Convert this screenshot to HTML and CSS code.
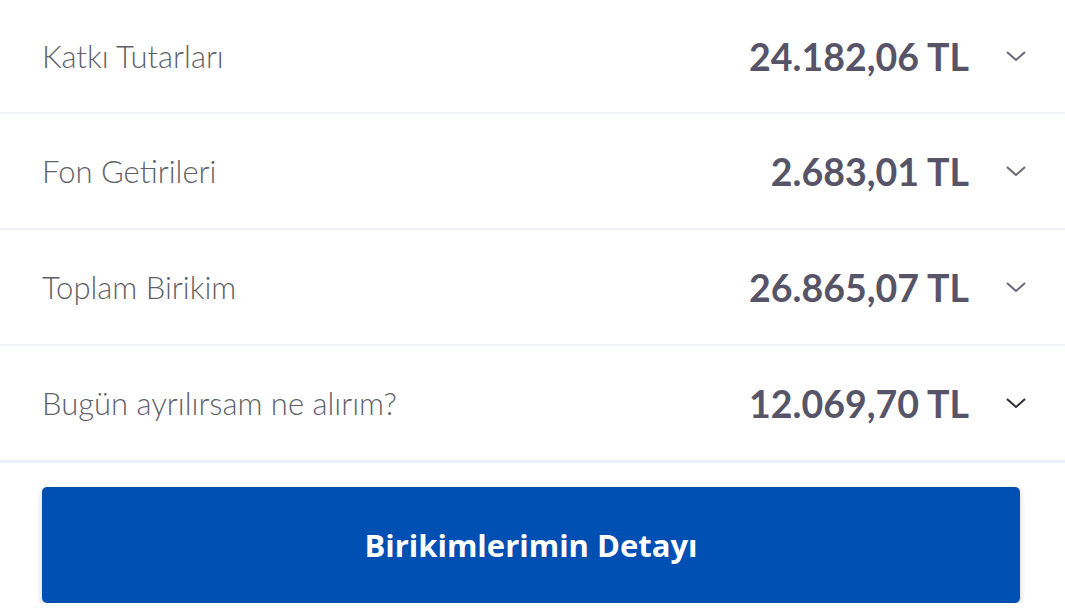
FILE: index.html
```html
<!DOCTYPE html>
<html lang="tr">
<head>
    <meta charset="UTF-8">
    <meta name="viewport" content="width=device-width, initial-scale=1.0">
    <title>Birikimlerim</title>
    <link rel="stylesheet" href="styles.css">
</head>
<body>
    <div class="summary">
        <div class="row">
            <span class="label">Katkı Tutarları</span>
            <span class="amount">24.182,06 TL</span>
            <svg class="chevron" viewBox="0 0 20 10"><path d="M1 1 L10 9 L19 1"/></svg>
        </div>
        <div class="row">
            <span class="label">Fon Getirileri</span>
            <span class="amount">2.683,01 TL</span>
            <svg class="chevron" viewBox="0 0 20 10"><path d="M1 1 L10 9 L19 1"/></svg>
        </div>
        <div class="row">
            <span class="label">Toplam Birikim</span>
            <span class="amount">26.865,07 TL</span>
            <svg class="chevron" viewBox="0 0 20 10"><path d="M1 1 L10 9 L19 1"/></svg>
        </div>
        <div class="row last">
            <span class="label">Bugün ayrılırsam ne alırım?</span>
            <span class="amount">12.069,70 TL</span>
            <svg class="chevron dark" viewBox="0 0 20 10"><path d="M1 1 L10 9 L19 1"/></svg>
        </div>
    </div>
    <div class="actions">
        <button type="button" class="detail-btn">Birikimlerimin Detayı</button>
    </div>
</body>
</html>
```

FILE: styles.css
```css
body {
    font-family: Lato, "Open Sans", sans-serif;
    background-color: #fff;
    margin: 0;
    padding: 0;
}
.row {
    display: flex;
    align-items: center;
    height: 114px;
    padding: 0 39px 0 42px;
    border-bottom: 2px solid #eef1f5;
}
.row:first-child {
    height: 112px;
}
.row.last {
    border-bottom: 3px solid #eef2f8;
}
.label {
    flex: 1;
    font-size: 31px;
    font-weight: 300;
    color: #5f5f68;
}
.amount {
    font-size: 37.5px;
    font-weight: 700;
    color: #575467;
}
.chevron {
    width: 20px;
    height: 10px;
    margin-left: 37px;
    fill: none;
    stroke: #6a6874;
    stroke-width: 2;
}
.chevron.dark {
    stroke: #2e2e36;
}
.actions {
    padding: 24px 45px 0 42px;
}
.detail-btn {
    width: 100%;
    height: 116px;
    background-color: #004fb3;
    color: #fff;
    border: none;
    border-radius: 5px;
    font-family: "Open Sans", sans-serif;
    font-size: 31px;
    font-weight: 700;
    box-shadow: 0px 3px 6px rgba(0, 0, 0, 0.2);
}
```
